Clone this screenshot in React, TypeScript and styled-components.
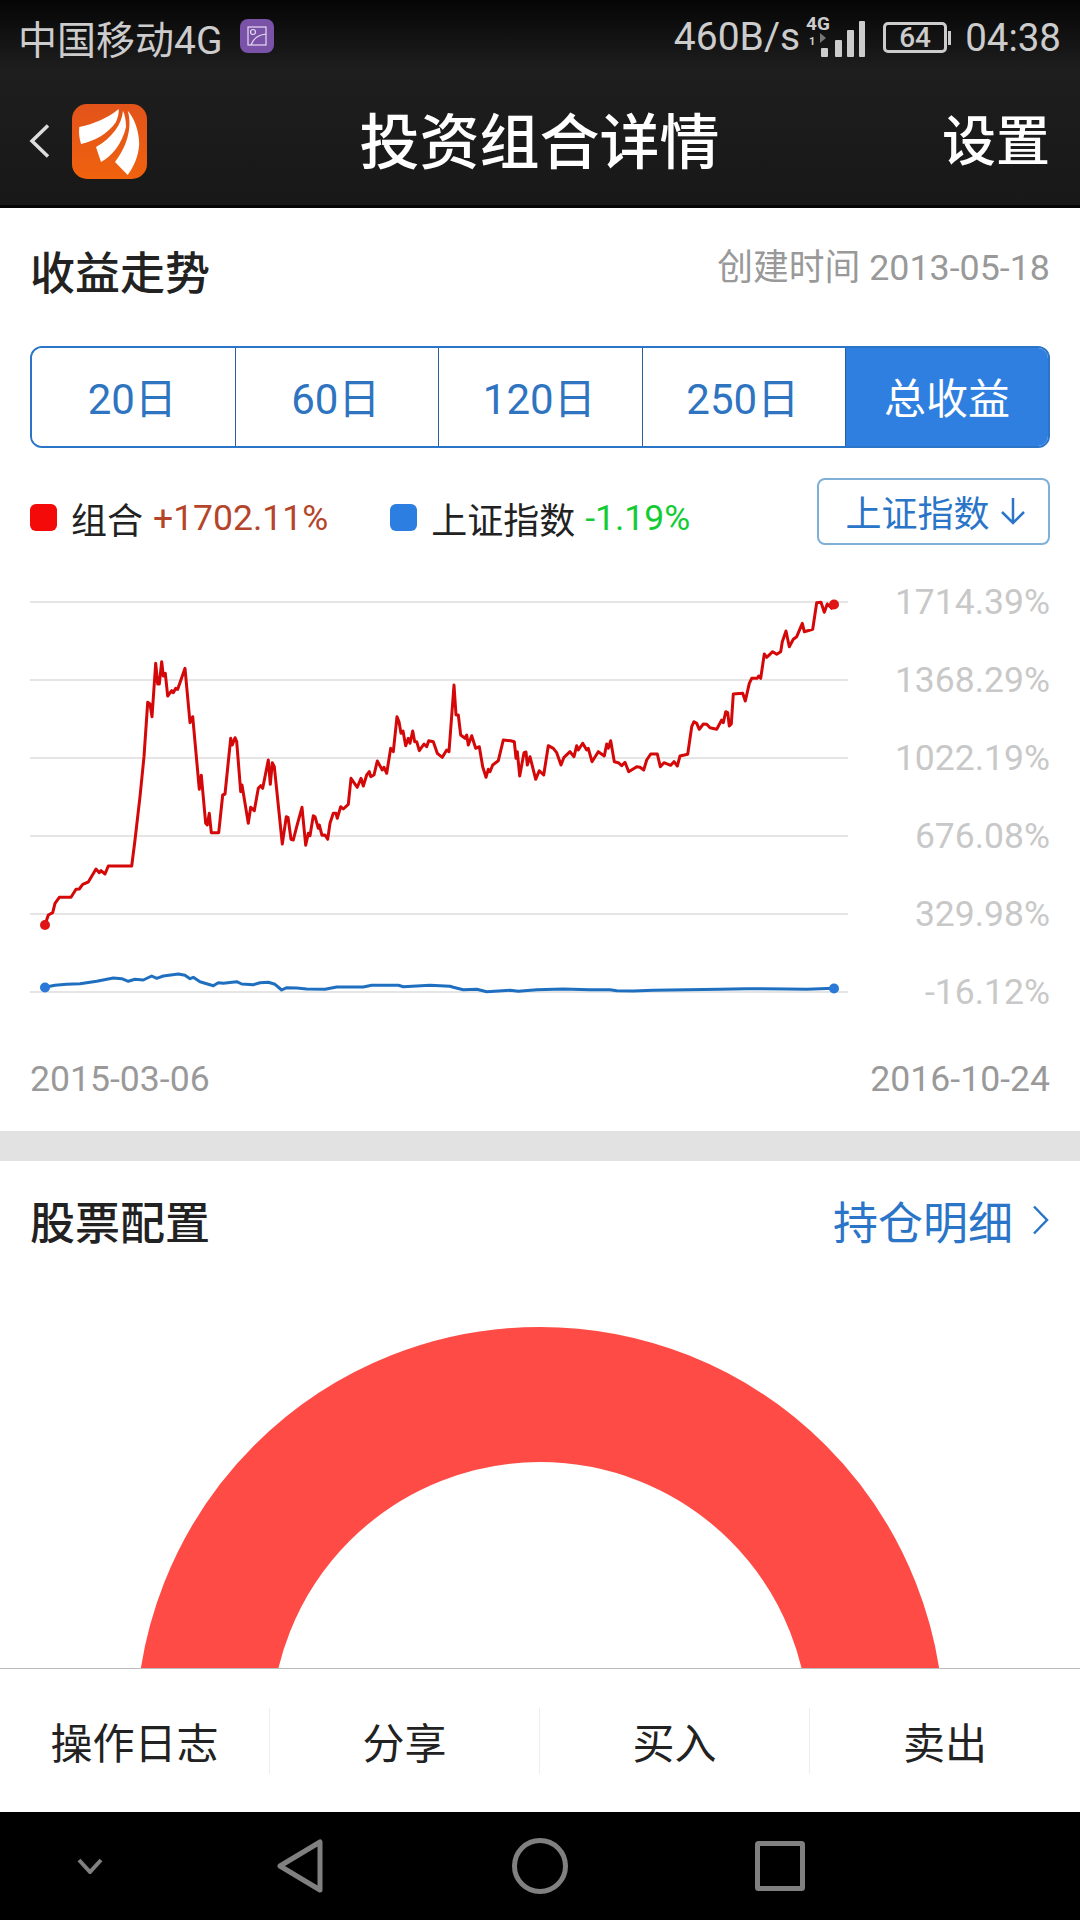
import React from 'react';
import styled, { createGlobalStyle } from 'styled-components';

const BLUE = '#2a75c8';

const GlobalStyle = createGlobalStyle`
  html, body {
    margin: 0;
    padding: 0;
    background: #fff;
  }
  body {
    font-family: Roboto, "Noto Sans CJK SC", sans-serif;
  }
  * {
    box-sizing: border-box;
  }
`;

// traced from the chart, in crop coordinates (3x)
const RED_LEFT = [
  [135, 1065], [145, 1035], [158, 1028], [165, 1000], [178, 982], [213, 982], [228, 958], [238, 957], [248, 943],
  [265, 936], [288, 897], [298, 908], [303, 902], [315, 912], [325, 888], [395, 888], [405, 810], [420, 680],
  [432, 560], [443, 397], [450, 402], [456, 440], [467, 280], [473, 342], [478, 342], [485, 275], [490, 318],
  [496, 310], [503, 378], [515, 362], [520, 368], [527, 355], [533, 358], [555, 295], [570, 458], [578, 440],
  [598, 658], [604, 616], [617, 760], [622, 765], [628, 730], [634, 788], [656, 788], [668, 675], [675, 672],
  [692, 505], [697, 525], [705, 503], [710, 515], [722, 665], [726, 645], [745, 760], [752, 712], [763, 722],
  [775, 655], [782, 647], [788, 655], [805, 570], [811, 643], [817, 578], [823, 590], [847, 822], [859, 740],
  [864, 742], [873, 808], [880, 810], [890, 770], [906, 712], [917, 826], [925, 790], [930, 797], [940, 737],
  [945, 740], [955, 775], [958, 765], [966, 796], [975, 795], [983, 808], [990, 760], [1000, 730], [1008, 730],
  [1012, 745], [1022, 710], [1030, 717], [1045, 703], [1053, 625], [1072, 652], [1083, 625], [1090, 648],
  [1100, 615], [1108, 605], [1112, 620], [1122, 615], [1132, 573], [1147, 600], [1152, 592], [1160, 610],
  [1172, 535], [1180, 545], [1191, 440], [1197, 455], [1203, 490], [1209, 483], [1217, 527], [1225, 505],
  [1230, 520], [1238, 483], [1244, 515], [1250, 515], [1258, 542], [1272, 522], [1280, 530], [1286, 512],
  [1300, 515], [1312, 550], [1327, 562], [1340, 540],
];

const RED_RIGHT = [
  [87, 545], [102, 345], [108, 435], [115, 435], [122, 495], [135, 505], [140, 495], [145, 525], [155, 497],
  [167, 535], [178, 530], [188, 590], [198, 622], [205, 598], [210, 605], [218, 585], [235, 572], [250, 510],
  [272, 512], [283, 515], [288, 565], [292, 545], [299, 618], [312, 548], [318, 546], [322, 585], [330, 560],
  [347, 628], [358, 602], [371, 615], [385, 527], [400, 535], [410, 548], [423, 585], [432, 562], [450, 545],
  [462, 560], [470, 527], [475, 540], [488, 520], [500, 540], [505, 535], [516, 575], [535, 545], [553, 558],
  [560, 522], [565, 535], [572, 512], [583, 575], [595, 578], [605, 587], [615, 577], [626, 605], [650, 590],
  [660, 592], [671, 600], [680, 570], [692, 552], [712, 552], [721, 590], [732, 578], [752, 586], [762, 575],
  [772, 588], [780, 558], [803, 553], [815, 470], [822, 455], [830, 460], [838, 478], [850, 462], [860, 463],
  [870, 473], [890, 478], [905, 450], [910, 458], [917, 425], [923, 428], [928, 468], [934, 462], [940, 372],
  [968, 370], [976, 393], [988, 340], [995, 325], [1012, 325], [1016, 318], [1022, 325], [1033, 252],
  [1040, 262], [1058, 245], [1070, 253], [1082, 245], [1087, 215], [1098, 183], [1108, 230], [1120, 208],
  [1130, 200], [1147, 160], [1153, 185], [1178, 178], [1190, 98], [1203, 97], [1213, 127], [1222, 102],
  [1235, 115], [1242, 103],
];

const BLUE_LEFT = [
  [135, 1252], [165, 1246], [200, 1243], [240, 1241], [290, 1234], [340, 1224], [365, 1226], [385, 1234],
  [405, 1228], [430, 1230], [455, 1218], [470, 1225], [490, 1218], [535, 1212], [555, 1216], [570, 1226],
  [580, 1222], [600, 1235], [640, 1247], [655, 1238], [670, 1240], [710, 1235], [725, 1242], [760, 1244],
  [780, 1238], [805, 1237], [825, 1243], [845, 1260], [860, 1253], [890, 1254], [920, 1257], [975, 1258],
  [1010, 1251], [1090, 1251], [1115, 1246], [1195, 1246], [1210, 1250], [1290, 1246], [1350, 1249],
];

const BLUE_RIGHT = [
  [100, 1252], [130, 1259], [170, 1258], [200, 1265], [270, 1261], [295, 1264], [350, 1259], [430, 1257],
  [510, 1259], [570, 1259], [590, 1262], [640, 1263], [700, 1261], [800, 1259], [900, 1258], [980, 1256],
  [1100, 1257], [1160, 1258], [1242, 1255],
];

const toPoints = (left: number[][], right: number[][]) =>
  [
    ...left.map(([x, y]) => `${(x / 3).toFixed(1)},${(570 + y / 3).toFixed(1)}`),
    ...right.map(([x, y]) => `${(420 + x / 3).toFixed(1)},${(570 + y / 3).toFixed(1)}`),
  ].join(' ');

const AXIS_LABELS = ['1714.39%', '1368.29%', '1022.19%', '676.08%', '329.98%', '-16.12%'];
const RANGES = ['20日', '60日', '120日', '250日', '总收益'];
const ACTIONS = ['操作日志', '分享', '买入', '卖出'];

function SignalIcon(): JSX.Element {
  return (
    <SignalSvg width='60' height='50' viewBox='0 -6 60 50'>
      <text x='0' y='14.5' fontFamily='Roboto' fontWeight='700' fontSize='19' fill='#ccc'>
        4G
      </text>
      <text x='3' y='29.5' fontFamily='Roboto' fontWeight='700' fontSize='11' fill='#ccc'>
        1
      </text>
      <path d='M14 18 L20 23 L14 28 Z' fill='#777' />
      <rect x='15' y='33' width='7' height='9' rx='1' fill='#ccc' />
      <rect x='29' y='25' width='7' height='17' rx='1' fill='#ccc' />
      <rect x='41' y='15' width='7' height='27' rx='1' fill='#ccc' />
      <rect x='53' y='6' width='6' height='36' rx='1' fill='#ccc' />
    </SignalSvg>
  );
}

function AppLogo(): JSX.Element {
  return (
    <svg width='75' height='75' viewBox='0 0 75 75'>
      <defs>
        <linearGradient id='logoFill' x1='0' y1='0' x2='0' y2='1'>
          <stop offset='0' stopColor='#e2531a' />
          <stop offset='1' stopColor='#f0620e' />
        </linearGradient>
      </defs>
      <rect width='75' height='75' rx='15' fill='url(#logoFill)' />
      <path d='M46.7 5 C36 14 22 20 7.3 23 C6.5 29 7.5 35 9 40 C22 37 36 30 44 18 C46 13 47 9 46.7 5 Z' fill='#fff' />
      <path d='M51 6.7 C50 20 40 34 24 43 L29 58 C40 52 50 40 54 23 C54 17 53 11 51 6.7 Z' fill='#fff' />
      <path d='M55.7 6.7 C61 24 54 44 43 58 L55.7 71 C64 60 68 46 67 36 C66 24 62 14 55.7 6.7 Z' fill='#fff' />
    </svg>
  );
}

function App(): JSX.Element {
  return (
    <Page>
      <GlobalStyle />
      <TopBar>
        <StatusBar>
          <StatusGroup>
            <Carrier>中国移动4G</Carrier>
            <GalleryBadge>
              <svg width='24' height='24' viewBox='0 0 24 24' fill='none' stroke='#e6dcf2' strokeWidth='1.2'>
                <rect x='3' y='3' width='18' height='18' />
                <circle cx='8' cy='8' r='2.5' />
                <path d='M6 21 C8 15 13 11 21 10' />
              </svg>
            </GalleryBadge>
          </StatusGroup>
          <StatusGroup>
            <NetSpeed>460B/s</NetSpeed>
            <SignalIcon />
            <Battery>64</Battery>
            <Clock>04:38</Clock>
          </StatusGroup>
        </StatusBar>
        <TitleBar>
          <TitleLeft>
            <svg width='21' height='34' viewBox='0 0 21 34' fill='none' stroke='#ddd' strokeWidth='3.5'>
              <polyline points='19,1.5 3,17 19,32.5' />
            </svg>
            <AppLogo />
          </TitleLeft>
          <PageTitle>投资组合详情</PageTitle>
          <SettingsLink>设置</SettingsLink>
        </TitleBar>
      </TopBar>

      <Main>
        <Section>
          <HeadRow>
            <SectionTitle>收益走势</SectionTitle>
            <Created>创建时间 2013-05-18</Created>
          </HeadRow>
          <Tabs>
            {RANGES.map((label, i) => (
              <Tab key={label} $active={i === RANGES.length - 1}>
                {label}
              </Tab>
            ))}
          </Tabs>
          <LegendRow>
            <LegendItem>
              <Swatch $color='#f50a0a' />
              <LegendLabel>组合</LegendLabel>
              <LegendValue $color='#b5452a'>+1702.11%</LegendValue>
            </LegendItem>
            <LegendItem>
              <Swatch $color='#2c7fe0' />
              <LegendLabel>上证指数</LegendLabel>
              <LegendValue $color='#13cc33'>-1.19%</LegendValue>
            </LegendItem>
            <IndexButton>
              上证指数
              <svg width='26' height='28' viewBox='0 0 26 28' fill='none' stroke={BLUE} strokeWidth='2.5'>
                <path d='M13 1 V26 M2 15 L13 26 L24 15' />
              </svg>
            </IndexButton>
          </LegendRow>
          <Chart>
            {AXIS_LABELS.map(label => (
              <GridRow key={label}>
                <GridLine />
                <AxisLabel>{label}</AxisLabel>
              </GridRow>
            ))}
            <Plot viewBox='0 563 1080 468'>
              <polyline
                points={toPoints(BLUE_LEFT, BLUE_RIGHT)}
                fill='none'
                stroke='#1f6fc0'
                strokeWidth='3'
                strokeLinejoin='round'
              />
              <polyline
                points={toPoints(RED_LEFT, RED_RIGHT)}
                fill='none'
                stroke='#d40808'
                strokeWidth='3'
                strokeLinejoin='round'
              />
              <circle cx='45' cy='925' r='5' fill='#e01515' />
              <circle cx='834' cy='604.5' r='5' fill='#e01515' />
              <circle cx='45' cy='987.5' r='5' fill='#2a78d8' />
              <circle cx='834' cy='988.5' r='5' fill='#2a78d8' />
            </Plot>
          </Chart>
          <DateRow>
            <span>2015-03-06</span>
            <span>2016-10-24</span>
          </DateRow>
        </Section>
        <Band />
        <Section>
          <StocksHead>
            <SectionTitle>股票配置</SectionTitle>
            <DetailLink>
              持仓明细
              <svg width='17' height='30' viewBox='0 0 17 30' fill='none' stroke={BLUE} strokeWidth='2.5'>
                <polyline points='2,1.5 15,15 2,28.5' />
              </svg>
            </DetailLink>
          </StocksHead>
          <Gauge>
            <svg width='808' height='808' viewBox='0 0 808 808'>
              <circle cx='404' cy='404' r='336.5' fill='none' stroke='#ff4b45' strokeWidth='135' />
            </svg>
          </Gauge>
        </Section>
      </Main>

      <ActionBar>
        {ACTIONS.map(label => (
          <Action key={label}>{label}</Action>
        ))}
      </ActionBar>

      <NavBar>
        <NavSlot>
          <svg width='26' height='16' viewBox='0 0 26 16' fill='none' stroke='#808080' strokeWidth='4'>
            <polyline points='2,2 13,14 24,2' />
          </svg>
        </NavSlot>
        <NavSlot>
          <svg width='46' height='54' viewBox='0 0 46 54' fill='none' stroke='#808080' strokeWidth='5' strokeLinejoin='round'>
            <path d='M43 3 V51 L3 27 Z' />
          </svg>
        </NavSlot>
        <NavSlot>
          <svg width='56' height='56' viewBox='0 0 56 56' fill='none' stroke='#808080' strokeWidth='5'>
            <circle cx='28' cy='28' r='25.5' />
          </svg>
        </NavSlot>
        <NavSlot>
          <svg width='50' height='50' viewBox='0 0 50 50' fill='none' stroke='#808080' strokeWidth='5' strokeLinejoin='round'>
            <rect x='2.5' y='2.5' width='45' height='45' rx='1' />
          </svg>
        </NavSlot>
      </NavBar>
    </Page>
  );
}

export default App;

const Page = styled.div`
  width: 1080px;
  height: 1920px;
  display: flex;
  flex-direction: column;
  overflow: hidden;
  background: #fff;
`;

const TopBar = styled.header`
  flex: none;
  height: 208px;
  background: linear-gradient(#050505 0, #1e1e1e 70px, #181818 200px);
  border-bottom: 3px solid #050505;
`;

const StatusBar = styled.div`
  height: 70px;
  padding: 4px 19px 0 18px;
  display: flex;
  align-items: center;
  justify-content: space-between;
  color: #ccc;
`;

const StatusGroup = styled.div`
  display: flex;
  align-items: center;
`;

const SignalSvg = styled.svg`
  margin-top: -6px;
`;

const Carrier = styled.span`
  font-size: 39px;
`;

const GalleryBadge = styled.span`
  width: 34px;
  height: 34px;
  margin: -2px 0 0 18px;
  border-radius: 8px;
  background: #7a52a8;
  display: flex;
  align-items: center;
  justify-content: center;
`;

const NetSpeed = styled.span`
  font-size: 39px;
  margin-right: 6px;
`;

const Battery = styled.span`
  position: relative;
  width: 64px;
  height: 31px;
  margin: 0 18px 0 17px;
  border: 3px solid #ccc;
  border-radius: 5px;
  font-size: 28px;
  font-weight: 500;
  line-height: 25px;
  text-align: center;

  &::after {
    content: '';
    position: absolute;
    right: -7px;
    top: 6px;
    width: 3px;
    height: 14px;
    background: #ccc;
  }
`;

const Clock = styled.span`
  font-size: 38.5px;
`;

const TitleBar = styled.div`
  height: 135px;
  padding: 7px 30px 0 29px;
  display: grid;
  grid-template-columns: 1fr auto 1fr;
  align-items: center;
`;

const TitleLeft = styled.div`
  display: flex;
  align-items: center;
  gap: 22px;
`;

const PageTitle = styled.h1`
  margin: 0 0 7px;
  color: #fff;
  font-size: 60px;
  font-weight: 500;
`;

const SettingsLink = styled.span`
  justify-self: end;
  margin-bottom: 7px;
  color: #fff;
  font-size: 54px;
  font-weight: 500;
`;

const Main = styled.main`
  flex: 1;
  min-height: 0;
  overflow: hidden;
`;

const Section = styled.section`
  padding: 0 30px 31px;
`;

const HeadRow = styled.div`
  height: 130px;
  padding-bottom: 6px;
  display: flex;
  align-items: center;
  justify-content: space-between;
`;

const SectionTitle = styled.h2`
  margin: 0;
  color: #222;
  font-size: 45px;
  font-weight: 500;
`;

const Created = styled.span`
  margin-bottom: 12px;
  color: #999;
  font-size: 35.8px;
`;

const Tabs = styled.div`
  margin-top: 8px;
  height: 102px;
  display: grid;
  grid-template-columns: repeat(4, 203.5px) 1fr;
  border: 2px solid ${BLUE};
  border-radius: 12px;
  overflow: hidden;
`;

const Tab = styled.div<{ $active: boolean }>`
  padding: 0 ${props => (props.$active ? '0' : '2px')} 4px 0;
  display: flex;
  align-items: center;
  justify-content: center;
  font-size: 42px;
  color: ${props => (props.$active ? '#fff' : '#2e74c0')};
  background: ${props => (props.$active ? '#2f7fe0' : '#fff')};
  border-right: ${props => (props.$active ? 'none' : '1px solid #2a5f9a')};
`;

const LegendRow = styled.div`
  margin-top: 30px;
  height: 66px;
  display: flex;
  align-items: center;
`;

const LegendItem = styled.div`
  padding-top: 13px;
  display: flex;
  align-items: center;
  margin-right: 62px;
`;

const Swatch = styled.span<{ $color: string }>`
  width: 27px;
  height: 27px;
  margin-right: 14px;
  border-radius: 6px;
  background: ${props => props.$color};
`;

const LegendLabel = styled.span`
  color: #222;
  font-size: 36px;
`;

const LegendValue = styled.span<{ $color: string }>`
  margin-left: 10px;
  color: ${props => props.$color};
  font-size: 35.5px;
`;

const IndexButton = styled.div`
  margin-left: auto;
  width: 233px;
  height: 67px;
  padding-left: 4px;
  display: flex;
  align-items: center;
  justify-content: center;
  gap: 10px;
  border: 2px solid #7fb0d8;
  border-radius: 8px;
  color: ${BLUE};
  font-size: 36px;
`;

const Chart = styled.div`
  position: relative;
  margin: 19px -30px 0;
  padding: 0 30px;
`;

const GridRow = styled.div`
  height: 78px;
  display: flex;
  align-items: center;
  justify-content: space-between;
`;

const GridLine = styled.div`
  width: 818px;
  height: 2px;
  background: #e5e5e5;
`;

const AxisLabel = styled.span`
  color: #c8c8c8;
  font-size: 35.5px;
`;

const Plot = styled.svg`
  position: absolute;
  left: 0;
  top: 0;
  width: 1080px;
  height: 468px;
`;

const DateRow = styled.div`
  margin-top: 27px;
  height: 42px;
  display: flex;
  align-items: center;
  justify-content: space-between;
  color: #999;
  font-size: 35.6px;
`;

const Band = styled.div`
  height: 30px;
  background: #e2e2e2;
`;

const StocksHead = styled(HeadRow)`
  height: 124px;
`;

const DetailLink = styled.span`
  display: flex;
  align-items: center;
  gap: 19px;
  color: ${BLUE};
  font-size: 45px;
  margin-right: 1px;
`;

const Gauge = styled.div`
  margin-top: 42px;
  display: flex;
  justify-content: center;
`;

const ActionBar = styled.div`
  flex: none;
  height: 144px;
  display: grid;
  grid-template-columns: repeat(4, 1fr);
  align-items: center;
  border-top: 1px solid #bbb;
  background: #fff;
`;

const Action = styled.div`
  height: 66px;
  display: flex;
  align-items: center;
  justify-content: center;
  color: #222;
  font-size: 42px;
  border-right: 1px solid #eee;

  &:last-child {
    border-right: none;
  }
`;

const NavBar = styled.nav`
  flex: none;
  height: 108px;
  background: #000;
  display: grid;
  grid-template-columns: 180px 240px 240px 240px 180px;
`;

const NavSlot = styled.div`
  display: flex;
  align-items: center;
  justify-content: center;
`;
